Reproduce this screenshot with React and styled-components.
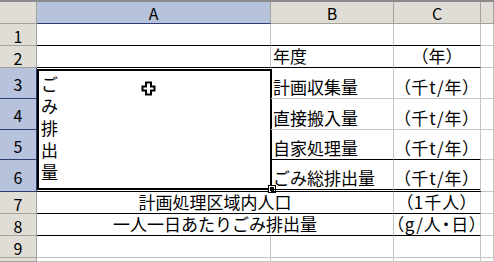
import React from "react";
import styled, { createGlobalStyle, css } from "styled-components";

const GlobalStyle = createGlobalStyle`
  html, body {
    margin: 0;
    padding: 0;
    background: #ffffff;
    overflow: hidden;
  }
  body {
    font-family: "Noto Sans CJK JP", "Noto Sans", sans-serif;
    color: #000;
  }
`;

const GRID = "#c6c6c6";

const Sheet = styled.div`
  width: 494px;
  height: 262px;
  border-top: 2px solid #8c8c8c;
  box-sizing: border-box;
  display: grid;
  grid-template-columns: 37px 234px 123px 87px 1fr;
  grid-template-rows: 22px 22px 22px 31px 31px 30px 32px 22px 22px 22px 1fr;
  position: relative;
`;

const Head = styled.div`
  box-sizing: border-box;
  display: flex;
  align-items: center;
  justify-content: center;
  font-size: 16px;
  line-height: 1;
  background: ${(p) => (p.selected ? "#b7c2dc" : "#dfddd6")};
  border-right: 1px solid ${(p) => (p.selected && p.row ? "#2f3d70" : "#a3a29c")};
  border-bottom: 1px solid ${(p) => (p.selected ? "#2f3d70" : "#a3a29c")};
  padding-top: ${(p) => (p.row ? "2px" : "1px")};
`;

const lineFor = (kind) => {
  if (kind === "black") return "1px solid #000";
  if (kind === "double") return "3px double #000";
  return `1px solid ${GRID}`;
};

const Cell = styled.div`
  box-sizing: border-box;
  position: relative;
  display: flex;
  align-items: flex-end;
  justify-content: ${(p) => (p.center ? "center" : "flex-start")};
  padding: 0 2px 1px 2px;
  font-size: 17px;
  line-height: 20px;
  white-space: nowrap;
  border-right: ${(p) => (p.noRight ? "none" : `1px solid ${GRID}`)};
  border-bottom: ${(p) => lineFor(p.bottom)};
  ${(p) =>
    p.span &&
    css`
      grid-column: span ${p.span};
    `}
`;

const Unit = styled.span`
  font-feature-settings: "palt";
  letter-spacing: 1px;
`;

const Merged = styled.div`
  box-sizing: border-box;
  grid-row: span 4;
  position: relative;
  border-right: 1px solid ${GRID};
  border-bottom: 3px double #000;
  padding: 5px 0 0 4px;
  font-size: 17px;
  line-height: 22px;
  display: flex;
  flex-direction: column;
`;

const VChar = styled.span`
  display: block;
  height: 22px;
`;

const Selection = styled.div`
  position: absolute;
  left: 0;
  top: 1px;
  right: -2px;
  bottom: -1px;
  border: 2px solid #000;
  pointer-events: none;
`;

const FillHandle = styled.div`
  position: absolute;
  right: -5px;
  bottom: -4px;
  width: 4px;
  height: 4px;
  background: #000;
  border: 1px solid #fff;
  outline: 1px solid #000;
`;

const Cursor = styled.svg`
  position: absolute;
  left: 104px;
  top: 13px;
`;

const PlusCursor = () => (
  <Cursor width="15" height="15" viewBox="0 0 15 15">
    <path
      d="M5 1.5h5v4h3.5v4H10v4H5v-4H1.5v-4H5z"
      fill="#fff"
      stroke="#000"
      strokeWidth="2"
      strokeLinejoin="miter"
    />
  </Cursor>
);

const rows3to6 = [
  { label: "計画収集量", bottom: "grid" },
  { label: "直接搬入量", bottom: "grid" },
  { label: "自家処理量", bottom: "black" },
  { label: "ごみ総排出量", bottom: "double" },
];

export default function App() {
  return (
    <>
      <GlobalStyle />
      <Sheet>
        <Head />
        <Head selected>A</Head>
        <Head>B</Head>
        <Head>C</Head>
        <Head />

        <Head row>1</Head>
        <Cell bottom="black" />
        <Cell bottom="black" />
        <Cell bottom="black" />
        <Cell />

        <Head row>2</Head>
        <Cell bottom="black" />
        <Cell bottom="black">年度</Cell>
        <Cell bottom="black" center>
          （年）
        </Cell>
        <Cell />

        {rows3to6.map((r, i) => (
          <React.Fragment key={r.label}>
            <Head row selected>
              {i + 3}
            </Head>
            {i === 0 && (
              <Merged>
                {"ごみ排出量".split("").map((ch) => (
                  <VChar key={ch}>{ch}</VChar>
                ))}
                <Selection>
                  <FillHandle />
                </Selection>
                <PlusCursor />
              </Merged>
            )}
            <Cell bottom={r.bottom}>{r.label}</Cell>
            <Cell bottom={r.bottom} center>
              <Unit>（千t/年）</Unit>
            </Cell>
            <Cell />
          </React.Fragment>
        ))}

        <Head row>7</Head>
        <Cell span={2} center bottom="black">
          計画処理区域内人口
        </Cell>
        <Cell bottom="black" center>
          <Unit>（1千人）</Unit>
        </Cell>
        <Cell />

        <Head row>8</Head>
        <Cell span={2} center bottom="black">
          一人一日あたりごみ排出量
        </Cell>
        <Cell bottom="black" center>
          <Unit>（g/人・日）</Unit>
        </Cell>
        <Cell />

        <Head row>9</Head>
        <Cell />
        <Cell />
        <Cell />
        <Cell />

        <Head row />
        <Cell />
        <Cell />
        <Cell />
        <Cell />
      </Sheet>
    </>
  );
}
